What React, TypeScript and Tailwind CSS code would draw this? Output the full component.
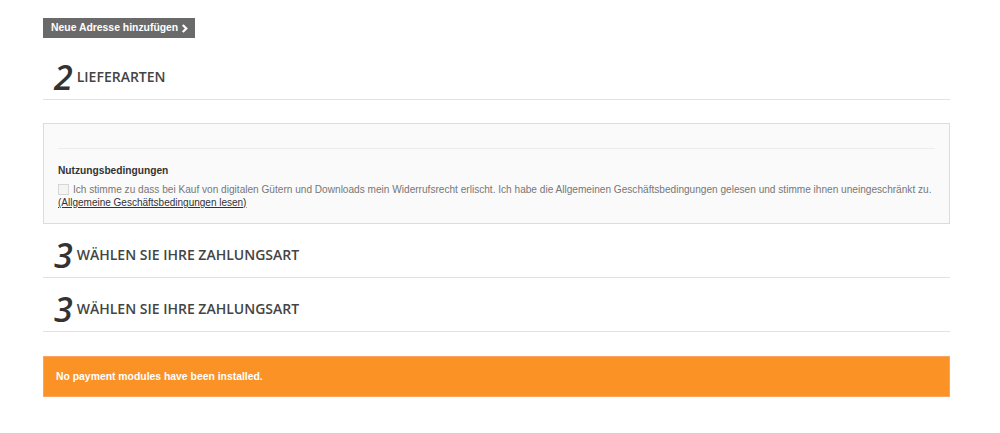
export default function App() {
  const Heading = ({ n, t }: { n: string; t: string }) => (
    <div className="flex items-end border-b border-[#e2e2e2] pb-[5px] pl-[11px] h-[54px]">
      <span className="text-[34px] leading-[34px] italic font-semibold text-[#333] mr-[4px] font-['Open_Sans',sans-serif]">{n}</span>
      <span className="text-[14px] leading-[20px] font-semibold text-[#444] uppercase mb-[7px] font-['Open_Sans',sans-serif]">{t}</span>
    </div>
  );
  return (
    <div className="w-[1000px] h-[433px] bg-white font-['Liberation_Sans',Arial,sans-serif]">
      <div className="ml-[43px] w-[907px] pt-[18px]">
        <div className="flex w-fit items-center h-[20px] pl-[8px] pr-[6px] bg-[#6a6a6a] text-white text-[10.4px] font-bold">
          Neue Adresse hinzufügen
          <svg width="8" height="9" viewBox="0 0 8 10" className="ml-[3px]"><path d="M1.5 1 L5.5 5 L1.5 9" stroke="white" strokeWidth="2.4" fill="none" /></svg>
        </div>
        <div className="mt-[8px]">
          <Heading n="2" t="Lieferarten" />
        </div>
        <div className="mt-[23px] border border-[#dcdcdc] bg-[#fafafa] h-[101px] px-[14px] pt-[24px]">
          <div className="border-t border-[#ececec]" />
          <div className="mt-[15px] text-[10.2px] leading-[13px] font-bold text-[#333]">Nutzungsbedingungen</div>
          <div className="mt-[6px] flex items-center text-[10.1px] leading-[13px] text-[#777] whitespace-nowrap">
            <span className="inline-block shrink-0 w-[11px] h-[11px] border border-[#d6d6d6] bg-[#f4f4f4] mr-[4px]" />
            Ich stimme zu dass bei Kauf von digitalen Gütern und Downloads mein Widerrufsrecht erlischt. Ich habe die Allgemeinen Geschäftsbedingungen gelesen und stimme ihnen uneingeschränkt zu.
          </div>
          <div className="text-[10px] text-[#333] underline leading-[13px]">(Allgemeine Geschäftsbedingungen lesen)</div>
        </div>
        <Heading n="3" t="Wählen Sie Ihre Zahlungsart" />
        <Heading n="3" t="Wählen Sie Ihre Zahlungsart" />
        <div className="mt-[24px] h-[41px] bg-[#fb9226] border border-[#f9a560] flex items-center pl-[12px] text-white text-[10.4px] font-bold">
          No payment modules have been installed.
        </div>
      </div>
    </div>
  );
}
